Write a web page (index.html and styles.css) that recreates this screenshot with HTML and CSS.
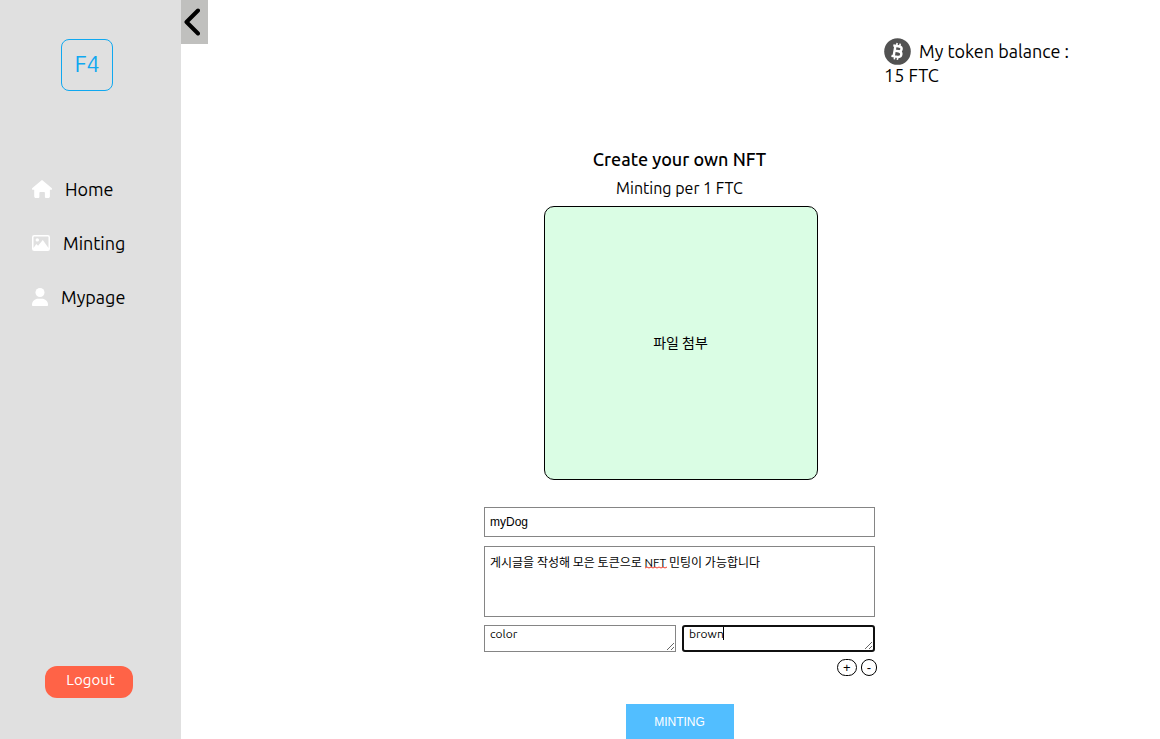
FILE: index.html
```html
<!DOCTYPE html>
<html lang="en">
<head>
<meta charset="utf-8">
<title>Create your own NFT</title>
<link rel="stylesheet" href="styles.css">
</head>
<body>
<div class="app">
  <aside class="sidebar">
    <a class="logo" href="#">F4</a>
    <nav class="nav">
      <a class="nav-link" href="#">
        <svg class="icon-home" viewBox="0 0 20 18" aria-hidden="true"><path d="M9.3.4a1.1 1.1 0 0 1 1.4 0l8.9 7.7c.8.8.4 1.7-.6 1.7h-1.1v6.4c0 1.1-.7 1.8-1.7 1.8h-2c-.8 0-1.3-.5-1.3-1.3v-3.5c0-.7-.4-1.1-1-1.1H8.400c-.6 0-1 .4-1 1.100v3.500c0 .8-.5 1.300-1.300 1.300H4c-1.100 0-1.800-.7-1.800-1.800V9.800H1c-1 0-1.400-.9-.6-1.700z"/></svg>
        <span>Home</span>
      </a>
      <a class="nav-link" href="#">
        <svg class="icon-image" viewBox="0 0 18 16" aria-hidden="true"><path fill-rule="evenodd" d="M2.200 0h13.600A2.200 2.200 0 0 1 18 2.200v11.600a2.200 2.200 0 0 1-2.200 2.200H2.200A2.200 2.200 0 0 1 0 13.800V2.200A2.200 2.200 0 0 1 2.200 0zM2.300 1.500a.8.8 0 0 0-.8.8V13l2.800-4 1.800 1.800L10.800 5l5.700 8V2.300a.8.8 0 0 0-.8-.8z"/><circle cx="5.300" cy="4.900" r="1.700"/></svg>
        <span>Minting</span>
      </a>
      <a class="nav-link" href="#">
        <svg class="icon-user" viewBox="0 0 16 18" aria-hidden="true"><circle cx="8" cy="4.500" r="4.500"/><path d="M0 16.900C0 13.200 2.800 10.800 6.200 10.800h3.600c3.400 0 6.200 2.400 6.200 6.100 0 .7-.5 1.100-1.100 1.100H1.100C.5 18 0 17.600 0 16.900z"/></svg>
        <span>Mypage</span>
      </a>
    </nav>
    <button class="logout" type="button">Logout</button>
  </aside>

  <button class="collapse" type="button" aria-label="Collapse menu">
    <svg viewBox="0 0 16 28" aria-hidden="true"><path d="M14 2.500 2.500 14 14 25.500"/></svg>
  </button>

  <main class="main">
    <p class="balance">
      <svg viewBox="0 0 27 27" aria-hidden="true"><circle cx="13.500" cy="13.500" r="13.300" fill="#525252"/><g transform="rotate(10 13.500 13.500)" fill="none" stroke="#fff"><path stroke-width="2.400" d="M10.500 8.200v10.600M8.300 8.200h6.200c3.500 0 3.500 4.900 0 4.900h-4M14.500 13.100c4.400 0 4.400 5.700 0 5.700H8.300"/><path stroke-width="1.600" d="M11.700 5.200v3M14.800 5.200v3M11.700 18.800v3M14.800 18.800v3"/></g></svg>
      My token balance :<br>15 FTC
    </p>

    <form class="mint">
      <h1 class="title">Create your own NFT</h1>
      <p class="price">Minting per 1 FTC</p>
      <button class="drop" type="button">파일 첨부</button>

      <input class="field name" type="text" value="myDog" aria-label="Name">
      <div class="description">
        <textarea class="field" aria-label="Description" spellcheck="false">게시글을 작성해 모은 토큰으로 NFT 민팅이 가능합니다</textarea>
        <svg class="squiggle" viewBox="0 0 22 3" aria-hidden="true"><path d="M0 2l2-1 2 1 2-1 2 1 2-1 2 1 2-1 2 1 2-1 2 1 2-1"/></svg>
      </div>
      <div class="traits">
        <textarea class="field trait" aria-label="Trait name" spellcheck="false">color</textarea>
        <div class="active">
          <textarea class="field trait" aria-label="Trait value" spellcheck="false">brown</textarea>
          <span class="caret"></span>
        </div>
      </div>
      <div class="trait-actions">
        <button type="button" aria-label="Add trait">+</button>
        <button type="button" aria-label="Remove trait">-</button>
      </div>
      <button class="submit" type="submit">MINTING</button>
    </form>
  </main>
</div>
</body>
</html>
```

FILE: styles.css
```css
* {
  box-sizing: border-box;
}

body {
  margin: 0;
  color: #000;
  background: #fff;
  font: 18px/24px Ubuntu, "Noto Sans", "Noto Sans CJK KR", sans-serif;
}

h1,
p {
  margin: 0;
}

button {
  padding: 0;
  border: 0;
  color: inherit;
  font: inherit;
  cursor: pointer;
}

svg {
  display: block;
}

.app {
  display: flex;
  align-items: flex-start;
  min-height: 100vh;
}

/* Sidebar */
.sidebar {
  display: flex;
  flex: 0 0 181px;
  flex-direction: column;
  align-self: stretch;
  padding: 39px 32px 41px;
  background: #e0e0e0;
}

.logo {
  display: grid;
  place-items: center;
  width: 52px;
  height: 52px;
  margin-left: 29px;
  padding-bottom: 2px;
  border: 1px solid #10a8f0;
  border-radius: 8px;
  color: #10a8f0;
  font-size: 23px;
  text-decoration: none;
}

.nav {
  display: grid;
  gap: 30px;
  margin-top: 86px;
}

.nav-link {
  display: flex;
  gap: 13px;
  align-items: center;
  color: #000;
  text-decoration: none;
}

.nav-link svg {
  fill: #fff;
}

.icon-home {
  width: 20px;
}

.icon-image {
  width: 18px;
}

.icon-user {
  width: 16px;
}

.logout {
  width: 88px;
  height: 32px;
  margin: auto 0 0 13px;
  padding: 0 0 4px 3px;
  border-radius: 12px;
  color: #fff;
  background: #ff6347;
  font-size: 15px;
}

.collapse {
  display: grid;
  flex: none;
  place-items: center start;
  width: 27px;
  height: 44px;
  padding: 0 0 1px 3px;
  background: #c0c0be;
}

.collapse svg {
  width: 16px;
  fill: none;
  stroke: #000;
  stroke-width: 4;
  stroke-linecap: round;
  stroke-linejoin: round;
}

/* Content */
.main {
  display: flex;
  flex: 1;
  flex-direction: column;
  align-items: center;
  padding: 39px 9px 0 0;
}

.balance {
  align-self: flex-end;
  width: 267px;
}

.balance svg {
  float: left;
  width: 27px;
  height: 27px;
  margin: -1px 8px -2px 0;
}

.mint {
  display: flex;
  flex-direction: column;
  align-items: center;
  width: 391px;
  margin-top: 60px;
}

.title {
  font-size: 18px;
  font-weight: 500;
}

.price {
  margin-top: 5px;
  font-size: 16px;
}

.drop {
  width: 274px;
  height: 274px;
  margin: 6px 0 27px 2px;
  border: 1px solid #000;
  border-radius: 10px;
  background: #dafde4;
  font-size: 14px;
}

.field {
  display: block;
  width: 100%;
  margin: 0;
  padding: 6px 5px;
  border: 1px solid #858585;
  border-radius: 0;
  outline: 0;
  color: #000;
  background: #fff;
  font: 12px/17px Ubuntu, "Noto Sans", "Noto Sans CJK KR", sans-serif;
}

.name {
  height: 30px;
  font-family: "Liberation Sans", Arial, sans-serif;
}

.description {
  position: relative;
  width: 100%;
  margin: 9px 0 8px;
}

.description .field {
  height: 71px;
  padding-top: 7px;
  resize: none;
}

.squiggle {
  position: absolute;
  top: 20px;
  left: 161px;
  width: 22px;
  fill: none;
  stroke: #f04030;
}

.traits {
  display: grid;
  grid-template-columns: 192fr 193fr;
  gap: 6px;
  width: 100%;
}

.trait {
  height: 27px;
  padding: 0 5px;
  overflow: hidden;
  line-height: 15px;
}

.active {
  position: relative;
}

.active .field {
  border: 2px solid #101010;
  border-radius: 3px;
  line-height: 13px;
}

.caret {
  position: absolute;
  top: 2px;
  left: 41px;
  width: 1px;
  height: 13px;
  background: #000;
}

.trait-actions {
  display: flex;
  gap: 4px;
  align-self: flex-end;
  margin: 7px -2px 28px 0;
}

.trait-actions button {
  height: 17px;
  padding: 0 5px;
  border: 1px solid #000;
  border-radius: 9px;
  background: #fff;
  font: 13px/14px "Liberation Sans", Arial, sans-serif;
}

.submit {
  width: 108px;
  height: 35px;
  color: #fff;
  background: #52beff;
  font: 12px "Liberation Sans", Arial, sans-serif;
}
```
